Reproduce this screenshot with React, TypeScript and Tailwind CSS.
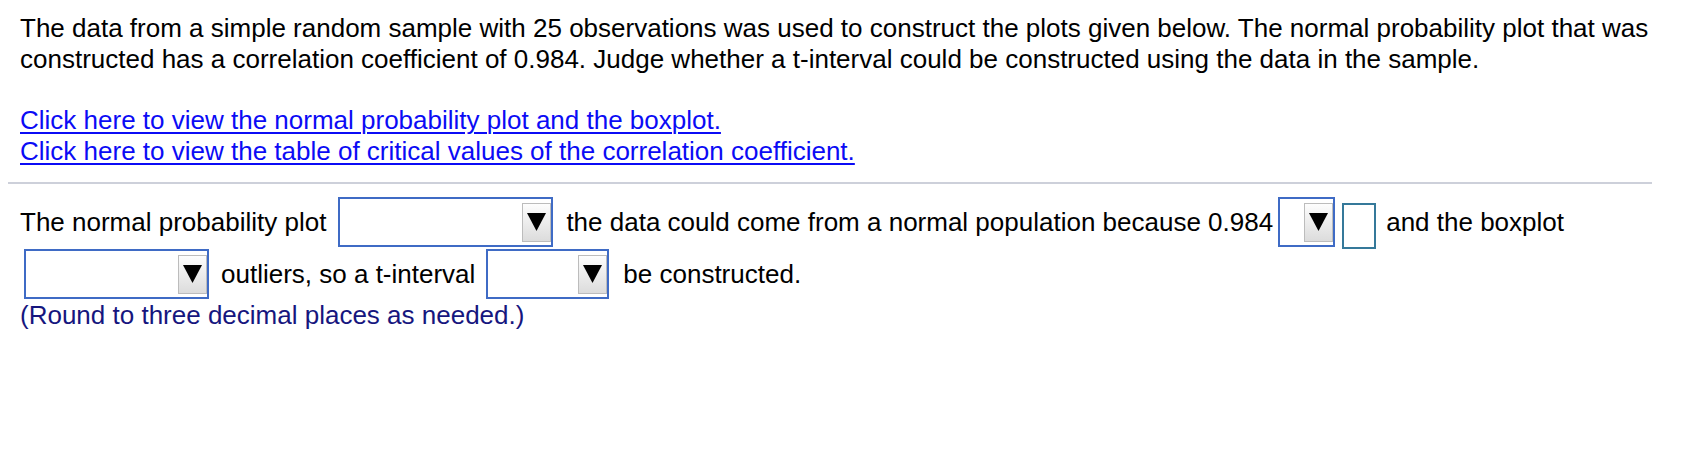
import React from 'react';

type DropProps = { width: string };

// select box with the grey arrow button on the right
const Drop: React.FC<DropProps> = ({ width }) => (
  <div className={`flex h-[50px] shrink-0 items-center justify-end border-2 border-[#3f6bc5] bg-white ${width}`}>
    <div className="flex h-[39px] w-[29px] items-center justify-center border border-[#bcbcbc] bg-gradient-to-b from-[#fdfdfd] to-[#dcdcdc]">
      <svg width="19" height="18" viewBox="0 0 19 18">
        <polygon points="0,0 19,0 9.5,18" fill="#000" />
      </svg>
    </div>
  </div>
);

export default function App() {
  return (
    <div className="min-h-screen bg-white font-['Liberation_Sans',Arial,Helvetica,sans-serif] text-[26px] leading-[31px] text-black">
      {/* Question */}
      <div className="px-[20px] pt-[13px] pr-[16px]">
        <p>
          The data from a simple random sample with 25 observations was used to construct the plots given below. The
          normal probability plot that was constructed has a correlation coefficient of 0.984. Judge whether a
          t-interval could be constructed using the data in the sample.
        </p>
        <div className="mt-[30px] flex flex-col items-start">
          <a href="#" className="text-[#0b0bf5] underline decoration-2 underline-offset-[3px]">
            Click here to view the normal probability plot and the boxplot.
          </a>
          <a href="#" className="text-[#0b0bf5] underline decoration-2 underline-offset-[3px]">
            Click here to view the table of critical values of the correlation coefficient.
          </a>
        </div>
      </div>

      <div className="ml-[8px] mr-[32px] mt-[15px] h-[2px] bg-[#cdd0da]" />

      {/* Answer */}
      <div className="px-[20px] pt-[13px]">
        <div className="flex h-[50px] items-center whitespace-nowrap">
          <span>The normal probability plot</span>
          <div className="ml-[12px]">
            <Drop width="w-[215px]" />
          </div>
          <span className="ml-[13px]">the data could come from a normal population because 0.984</span>
          <div className="ml-[5px]">
            <Drop width="w-[57px]" />
          </div>
          <div className="ml-[7px] mt-[8px] h-[46px] w-[34px] border-2 border-[#35799a] bg-white" />
          <span className="ml-[10px]">and the boxplot</span>
        </div>
        <div className="mt-[2px] flex h-[50px] items-center whitespace-nowrap">
          <div className="ml-[4px]">
            <Drop width="w-[185px]" />
          </div>
          <span className="ml-[12px]">outliers, so a t-interval</span>
          <div className="ml-[11px]">
            <Drop width="w-[123px]" />
          </div>
          <span className="ml-[14px]">be constructed.</span>
        </div>
        <p className="mt-[1px] text-[#16167e]">(Round to three decimal places as needed.)</p>
      </div>
    </div>
  );
}
